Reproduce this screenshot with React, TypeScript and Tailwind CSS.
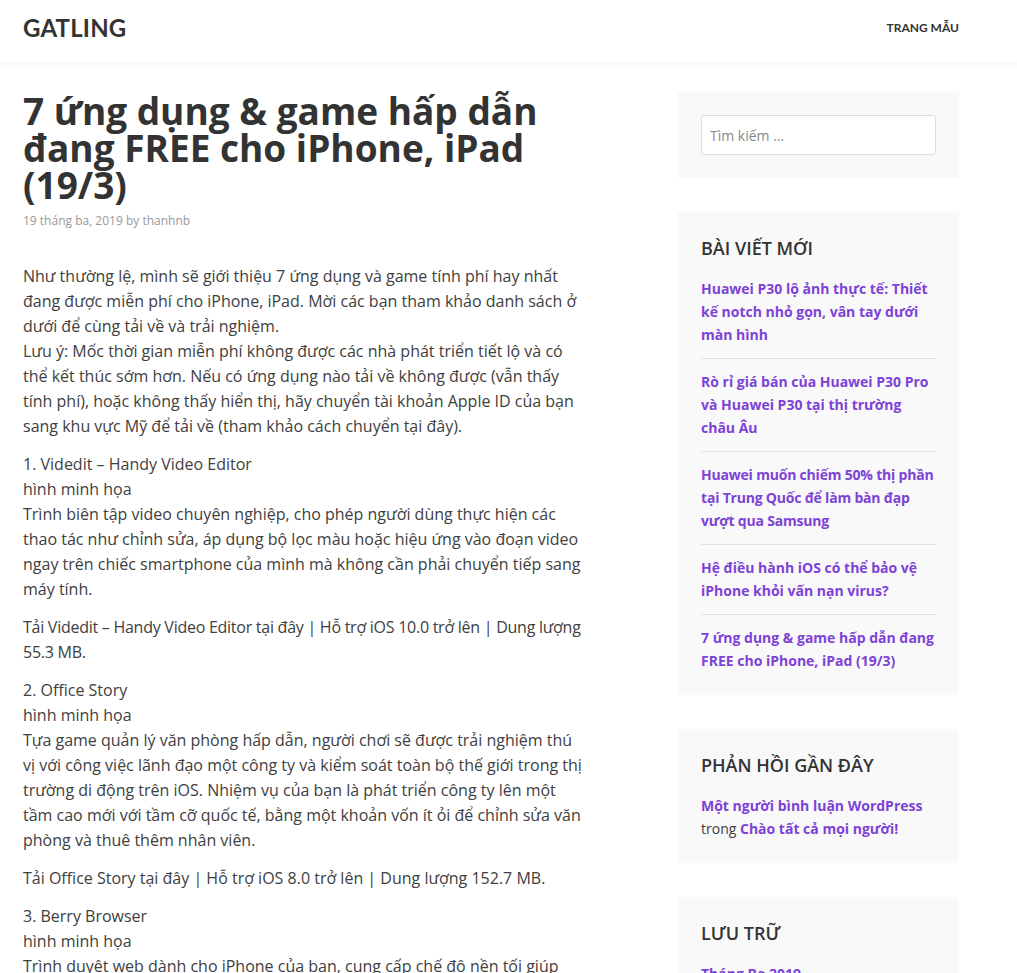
export default function App() {
  const recent = [
    { t: "Huawei P30 lộ ảnh thực tế: Thiết kế notch nhỏ gọn, vân tay dưới màn hình", tight: false },
    { t: "Rò rỉ giá bán của Huawei P30 Pro và Huawei P30 tại thị trường châu Âu", tight: false },
    { t: "Huawei muốn chiếm 50% thị phần tại Trung Quốc để làm bàn đạp vượt qua Samsung", tight: true },
    { t: "Hệ điều hành iOS có thể bảo vệ iPhone khỏi vấn nạn virus?", tight: false },
    { t: "7 ứng dụng & game hấp dẫn đang FREE cho iPhone, iPad (19/3)", tight: false },
  ];

  return (
    <div className="min-h-screen bg-white text-[#404040] font-['Open_Sans',sans-serif]">
      {/* header */}
      <header className="h-[62px] pb-[7px] bg-white shadow-[0_3px_6px_rgba(0,0,0,0.04)] flex items-center justify-between pl-[23px] pr-[58px] font-['Lato',sans-serif]">
        <a className="text-[24px] font-bold tracking-[0.2px] text-[#333]">GATLING</a>
        <nav className="text-[12px] font-bold uppercase text-[#333]">Trang mẫu</nav>
      </header>

      <div className="flex justify-between pl-[23px] pr-[58px] pt-[30px]">
        {/* main */}
        <main className="w-[562px]">
          <h1 className="text-[37px] leading-[37px] font-bold text-[#333]">
            7 ứng dụng &amp; game hấp dẫn đang FREE cho iPhone, iPad (19/3)
          </h1>
          <div className="mt-[9px] text-[12px] leading-[18px] text-[#999]">
            19 tháng ba, 2019 by thanhnb
          </div>

          <div className="mt-[34px] text-[16px] leading-[25px]">
            <p className="mb-[13px]">
              Như thường lệ, mình sẽ giới thiệu 7 ứng dụng và game tính phí hay nhất đang được miễn phí cho iPhone, iPad. Mời các bạn tham khảo danh sách ở dưới để cùng tải về và trải nghiệm.
              <br />
              Lưu ý: Mốc thời gian miễn phí không được các nhà phát triển tiết lộ và có thể kết thúc sớm hơn. Nếu có ứng dụng nào tải về không được (vẫn thấy tính phí), hoặc không thấy hiển thị, hãy chuyển tài khoản Apple ID của bạn sang khu vực Mỹ để tải về (tham khảo cách chuyển tại đây).
            </p>
            <p className="mb-[13px]">
              1. Videdit – Handy Video Editor
              <br />
              hình minh họa
              <br />
              Trình biên tập video chuyên nghiệp, cho phép người dùng thực hiện các thao tác như chỉnh sửa, áp dụng bộ lọc màu hoặc hiệu ứng vào đoạn video ngay trên chiếc smartphone của mình mà không cần phải chuyển tiếp sang máy tính.
            </p>
            <p className="mb-[13px] tracking-[-0.26px]">
              Tải Videdit – Handy Video Editor tại đây | Hỗ trợ iOS 10.0 trở lên | Dung lượng 55.3 MB.
            </p>
            <p className="mb-[13px]">
              2. Office Story
              <br />
              hình minh họa
              <br />
              Tựa game quản lý văn phòng hấp dẫn, người chơi sẽ được trải nghiệm thú vị với công việc lãnh đạo một công ty và kiểm soát toàn bộ thế giới trong thị trường di động trên iOS. Nhiệm vụ của bạn là phát triển công ty lên một tầm cao mới với tầm cỡ quốc tế, bằng một khoản vốn ít ỏi để chỉnh sửa văn phòng và thuê thêm nhân viên.
            </p>
            <p className="mb-[13px]">
              Tải Office Story tại đây | Hỗ trợ iOS 8.0 trở lên | Dung lượng 152.7 MB.
            </p>
            <p className="mb-[13px]">
              3. Berry Browser
              <br />
              hình minh họa
              <br />
              Trình duyệt web dành cho iPhone của bạn, cung cấp chế độ nền tối giúp bảo vệ mắt khi duyệt web vào ban đêm.
            </p>
          </div>
        </main>

        {/* sidebar */}
        <aside className="w-[281px] flex flex-col gap-[34px]">
          <section className="bg-[#f9f9f9] p-[23px]">
            <input
              type="search"
              placeholder="Tìm kiếm …"
              className="w-full h-[40px] border border-[#ddd] rounded-[3px] bg-white px-[8px] text-[14px] placeholder:text-[#888] outline-none"
            />
          </section>

          <section className="bg-[#f9f9f9] p-[23px]">
            <h2 className="text-[18px] leading-[26px] font-semibold uppercase text-[#333] mb-[16px]">Bài viết mới</h2>
            <ul>
              {recent.map((r, i) => (
                <li
                  key={i}
                  className={`pt-[11px] pb-[12px] first:pt-0 last:pb-0 text-[14px] leading-[23px] ${i > 0 ? "border-t border-[#e3e3e3]" : ""} ${r.tight ? "tracking-[-0.2px]" : ""}`}
                >
                  <a className="font-bold text-[#7d42d6]">{r.t}</a>
                </li>
              ))}
            </ul>
          </section>

          <section className="bg-[#f9f9f9] p-[23px]">
            <h2 className="text-[18px] leading-[26px] font-semibold uppercase text-[#333] mb-[16px]">Phản hồi gần đây</h2>
            <p className="text-[14px] leading-[23px]">
              <a className="font-bold text-[#7d42d6]">Một người bình luận WordPress</a>
              {" "}trong{" "}
              <a className="font-bold text-[#7d42d6]">Chào tất cả mọi người!</a>
            </p>
          </section>

          <section className="bg-[#f9f9f9] p-[23px]">
            <h2 className="text-[18px] leading-[26px] font-semibold uppercase text-[#333] mb-[16px]">Lưu trữ</h2>
            <div className="text-[14px] leading-[23px]">
              <a className="font-bold text-[#7d42d6]">Tháng Ba 2019</a>
            </div>
          </section>
        </aside>
      </div>
    </div>
  );
}
